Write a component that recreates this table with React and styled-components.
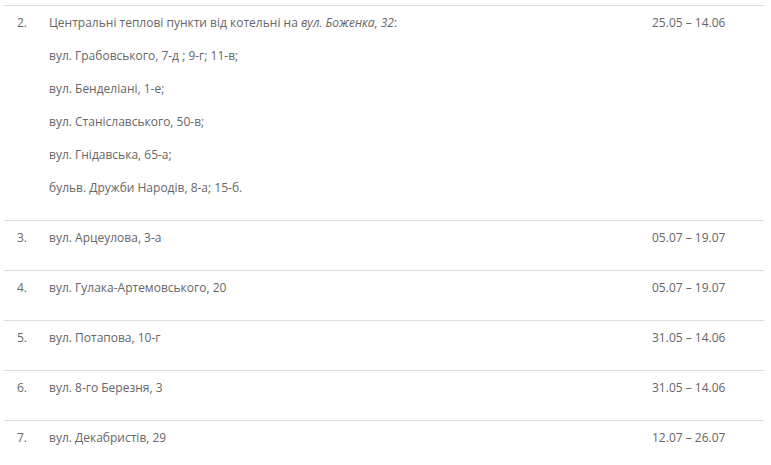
import styled, { createGlobalStyle } from 'styled-components';

const GlobalStyle = createGlobalStyle`
  body {
    margin: 0;
    background: #fff;
    font-family: 'Open Sans', 'Liberation Sans', sans-serif;
  }
`;

const rows = [
  {
    num: '2.',
    lines: [
      <>
        Центральні теплові пункти від котельні на <em>вул. Боженка, 32</em>:
      </>,
      'вул. Грабовського, 7-д ; 9-г; 11-в;',
      'вул. Бенделіані, 1-е;',
      'вул. Станіславського, 50-в;',
      'вул. Гнідавська, 65-а;',
      'бульв. Дружби Народів, 8-а; 15-б.',
    ],
    date: '25.05 – 14.06',
  },
  { num: '3.', lines: ['вул. Арцеулова, 3-а'], date: '05.07 – 19.07' },
  { num: '4.', lines: ['вул. Гулака-Артемовського, 20'], date: '05.07 – 19.07' },
  { num: '5.', lines: ['вул. Потапова, 10-г'], date: '31.05 – 14.06' },
  { num: '6.', lines: ['вул. 8-го Березня, 3'], date: '31.05 – 14.06' },
  { num: '7.', lines: ['вул. Декабристів, 29'], date: '12.07 – 26.07' },
];

const App = () => {
  return (
    <Page>
      <GlobalStyle />
      <Table>
        {rows.map(row => (
          <Row key={row.num}>
            <Cell>
              <Text>{row.num}</Text>
            </Cell>
            <Cell>
              {row.lines.map((line, i) => (
                <Text key={i}>{line}</Text>
              ))}
            </Cell>
            <Cell>
              <Text>{row.date}</Text>
            </Cell>
          </Row>
        ))}
      </Table>
    </Page>
  );
};

const Page = styled.div`
  padding: 5px 7px 0 4px;
`;

const Table = styled.div`
  display: flex;
  flex-direction: column;
  width: 760px;
`;

const Row = styled.div`
  display: grid;
  grid-template-columns: 32px 1fr 125px;
  border-top: 1px solid #dddddd;
`;

const Cell = styled.div`
  padding: 8px 13px;
`;

const Text = styled.p`
  margin: 0 0 15px;
  font-size: 12px;
  line-height: 18px;
  color: #666666;
  white-space: nowrap;

  em {
    font-style: italic;
  }
`;

export default App;
